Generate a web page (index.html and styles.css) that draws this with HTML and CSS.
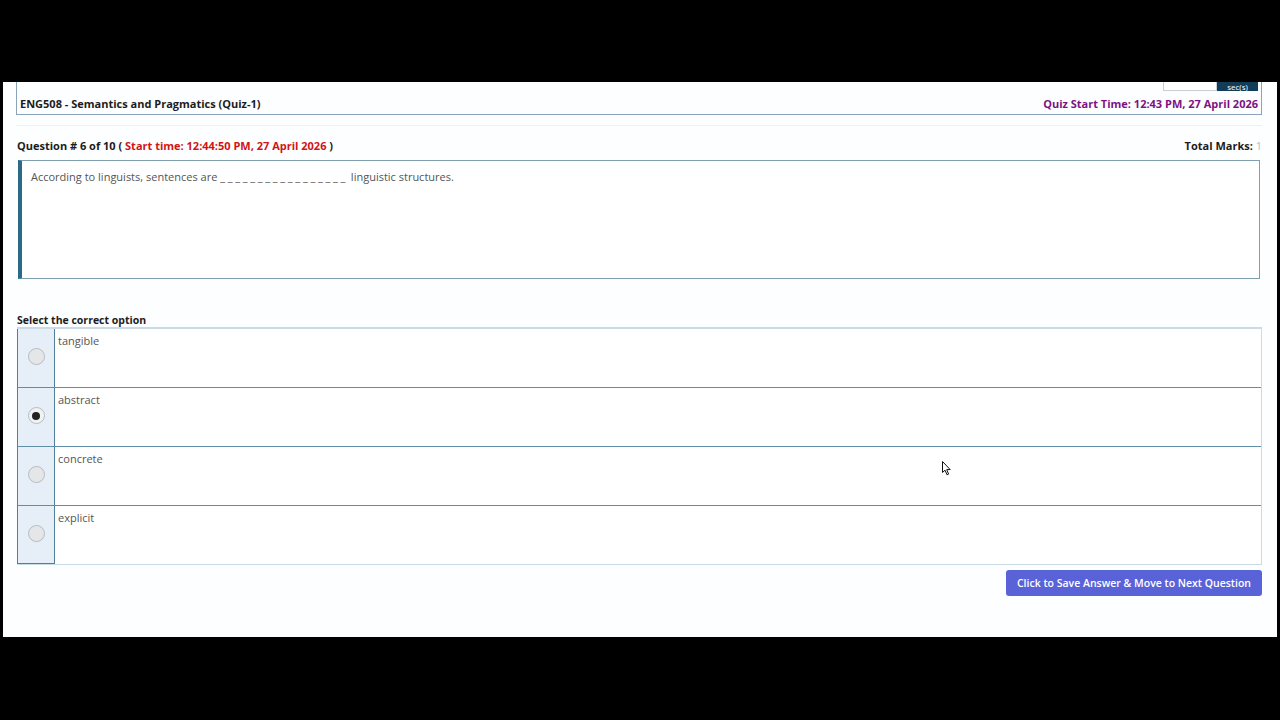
FILE: index.html
```html
<!DOCTYPE html>
<html lang="en">

<head>
  <meta charset="UTF-8">
  <title>ENG508 Quiz</title>
  <link rel="stylesheet" href="styles.css">
</head>

<body>

  <div class="screen">

    <div class="quiz-header">
      <div class="timer">
        <span class="timer-box"></span>
        <span class="timer-label">sec(s)</span>
      </div>
      <div class="header-row">
        <span class="course">ENG508 - Semantics and Pragmatics (Quiz-1)</span>
        <span class="quiz-start">Quiz Start Time: 12:43 PM, 27 April 2026</span>
      </div>
    </div>

    <hr class="divider">

    <div class="question-row">
      <span class="question-no">Question # 6 of 10 ( <span class="start-time">Start time: 12:44:50 PM, 27 April 2026</span> )</span>
      <span class="marks">Total Marks: <span class="marks-val">1</span></span>
    </div>

    <div class="question-box">
      According to linguists, sentences are <span class="blank">_________________</span> linguistic structures.
    </div>

    <div class="select-label">Select the correct option</div>

    <div class="options">
      <div class="option">
        <div class="radio-cell"><span class="radio"></span></div>
        <div class="option-text">tangible</div>
      </div>
      <div class="option">
        <div class="radio-cell"><span class="radio checked"></span></div>
        <div class="option-text">abstract</div>
      </div>
      <div class="option">
        <div class="radio-cell"><span class="radio"></span></div>
        <div class="option-text">concrete</div>
      </div>
      <div class="option">
        <div class="radio-cell"><span class="radio"></span></div>
        <div class="option-text">explicit</div>
      </div>
    </div>

    <div class="actions">
      <button class="next-btn">Click to Save Answer &amp; Move to Next Question</button>
    </div>

    <!-- mouse pointer -->
    <svg class="cursor" width="10" height="15" viewBox="0 0 10 15">
      <path d="M0.5 0.5 L0.5 11.5 L3 9.2 L5 13.8 L6.6 13.1 L4.7 8.6 L8.2 8.6 Z" fill="#fff" stroke="#111" stroke-width="1"/>
    </svg>

  </div>

</body>

</html>
```

FILE: styles.css
```css
body {
  margin: 0;
  background-color: #000;
  font-family: "Open Sans", Arial, sans-serif;
  font-size: 11px;
  color: #333;
}

.screen {
  position: relative;
  margin: 82px 3px 0 3px;
  height: 555px;
  background-color: #fdfeff;
  overflow: hidden;
  padding: 0 15px 0 13px;
}

.quiz-header {
  margin-top: -15px;
  border: 1px solid #8aa3bb;
  border-top: none;
  padding: 0 3px 0 3px;
}

.timer {
  display: flex;
  justify-content: flex-end;
  height: 24px;
}

.timer-box {
  width: 52px;
  border: 1px solid #c9cfd6;
  border-top: none;
  background-color: #fff;
}

.timer-label {
  width: 41px;
  background-color: #123d5a;
  color: #fff;
  font-size: 8px;
  line-height: 8px;
  padding-top: 16px;
  text-align: center;
  box-sizing: border-box;
}

.header-row {
  display: flex;
  justify-content: space-between;
  align-items: center;
  height: 22px;
  padding-top: 1px;
  font-weight: bold;
  font-size: 11px;
}

.course {
  color: #1c1c1c;
}

.quiz-start {
  color: #7d1282;
}

.divider {
  border: none;
  border-top: 1px solid #eef0f2;
  margin: 10px 0 0 0;
}

.question-row {
  display: flex;
  justify-content: space-between;
  align-items: center;
  margin-top: 12px;
  padding-left: 1px;
  font-weight: bold;
  font-size: 11px;
  color: #1c1c1c;
}

.start-time {
  color: #d21414;
}

.marks-val {
  color: #bbb;
  font-weight: normal;
}

.question-box {
  margin: 7px 2px 0 2px;
  height: 99px;
  border: 1px solid #7d9fb0;
  border-left: 4px solid #2a6a86;
  padding: 8px 9px 10px 9px;
  color: #555;
  font-size: 11px;
  background-color: #fff;
}

.blank {
  letter-spacing: 2.7px;
}

.select-label {
  margin-top: 34px;
  padding-left: 1px;
  font-weight: bold;
  font-size: 10.5px;
  color: #1c1c1c;
}

.options {
  margin-left: 1px;
  border: 1px solid #c8dbe6;
  border-left: none;
}

.option {
  display: flex;
  height: 58px;
  border-top: 1px solid #5f8ea8;
}

.option:first-child {
  border-top-color: #c8dbe6;
}

.radio-cell {
  width: 38px;
  background-color: #e6eff8;
  border-left: 1px solid #4f7f9c;
  border-right: 1px solid #4f7f9c;
  display: flex;
  justify-content: center;
  padding-top: 19px;
  box-sizing: border-box;
}

.option:last-child .radio-cell {
  border-bottom: 1px solid #4f7f9c;
}

.radio {
  width: 17px;
  height: 17px;
  border-radius: 50%;
  border: 1px solid #b5bcc2;
  background-color: #e4e6e8;
  box-sizing: border-box;
  display: flex;
  align-items: center;
  justify-content: center;
}

.radio.checked {
  background-color: #f2f2f2;
}

.radio.checked::after {
  content: "";
  width: 8px;
  height: 8px;
  border-radius: 50%;
  background-color: #222;
}

.option-text {
  flex: 1;
  padding: 4px 3px;
  color: #555;
  font-size: 11px;
  background-color: #fff;
}

.actions {
  display: flex;
  justify-content: flex-end;
  margin-top: 5px;
}

.next-btn {
  width: 256px;
  height: 26px;
  background-color: #5a62d8;
  color: #fff;
  border: none;
  border-radius: 3px;
  font-family: "Open Sans", Arial, sans-serif;
  font-size: 10.5px;
  font-weight: 600;
}

.cursor {
  position: absolute;
  left: 939px;
  top: 379px;
}
```
